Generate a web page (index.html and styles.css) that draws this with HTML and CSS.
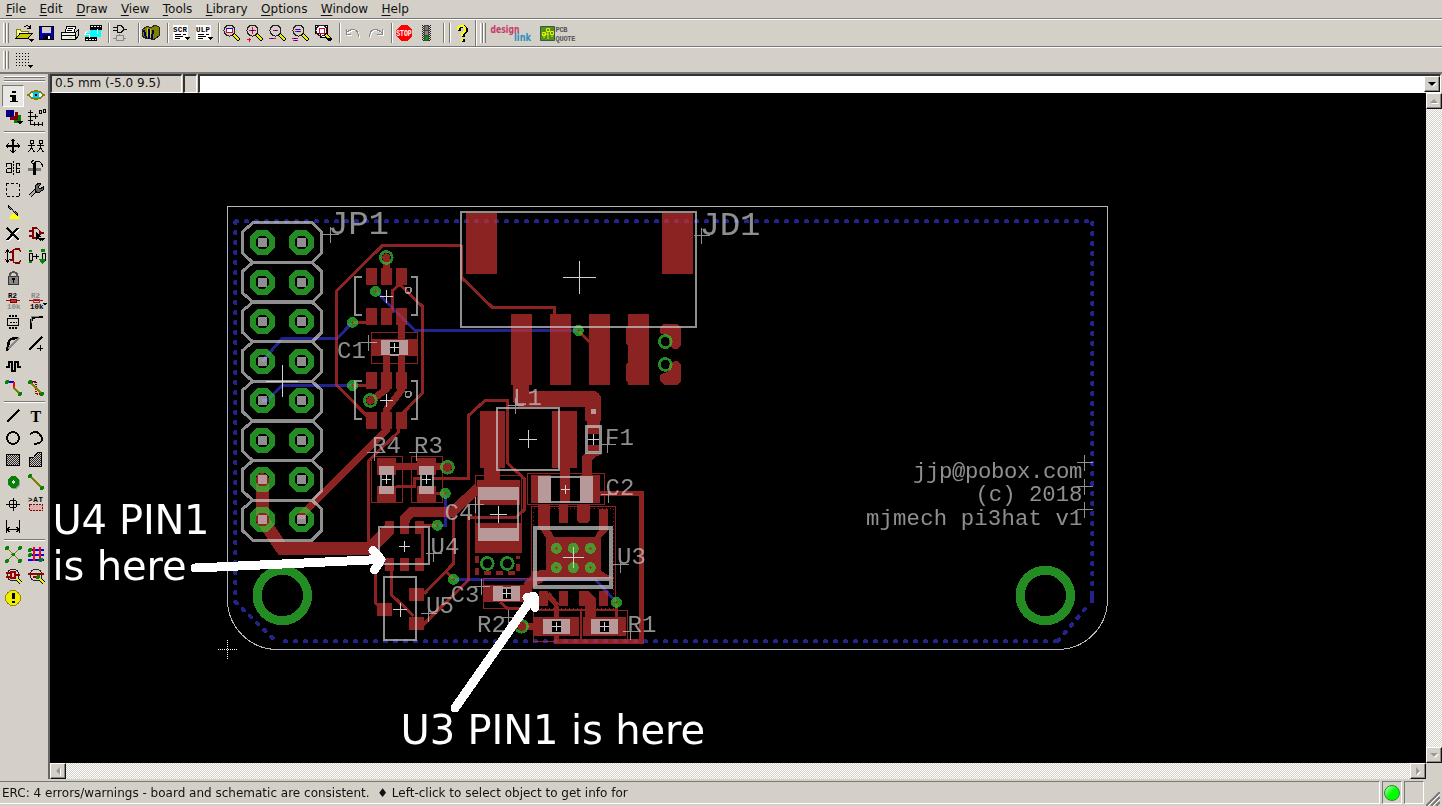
FILE: index.html
```html
<!DOCTYPE html>
<html lang="en">
<head>
<meta charset="utf-8">
<title>Board</title>
<link rel="stylesheet" href="styles.css">
</head>
<body>
<div class="app">
<nav class="menubar">
<span><u>F</u>ile</span><span><u>E</u>dit</span><span><u>D</u>raw</span><span><u>V</u>iew</span><span><u>T</u>ools</span><span><u>L</u>ibrary</span><span><u>O</u>ptions</span><span><u>W</u>indow</span><span><u>H</u>elp</span>
</nav>

<div class="toolbar actions">
<i class="grip"></i>
<svg class="ic" viewBox="0 0 23 24"><path d="M4 17V8h4l1 2h7v3" fill="#ffffa0" stroke="#808000"/><path d="M4 17.500l4-5h12l-4 5z" fill="#c8c800" stroke="#000"/><path d="M12 6q4-3 6 1M18 4v3h-3" fill="none" stroke="#000"/><path d="M17 18h5l-2.500 3z"/></svg>
<svg class="ic" viewBox="0 0 23 24"><path d="M4.500 5.500h14v13h-14z" fill="#0000c0" stroke="#000"/><path d="M7 6h9v6H7z" fill="#d4d0c8"/><path d="M8 14h8v4H8z"/><path d="M13 15h2v3h-2z" fill="#fff"/></svg>
<svg class="ic" viewBox="0 0 23 24"><path d="M7 11l2-6h9l-2 6" fill="#fff" stroke="#000"/><path d="M3.500 11.500h14v7h-14z" fill="#eee" stroke="#000"/><path d="M17.500 11.500l3-3v6l-3 4M4 14.500h13M10 7.500h5M9 9.500h5" fill="none" stroke="#000"/><path d="M11 16h3v1h-3z" fill="#dd0"/></svg>
<svg class="ic" viewBox="0 0 23 24"><path d="M9 4h12v5H9zM4 15h12v5H4z"/><path d="M9 9h11v7H4v-4h5z" fill="#0ff"/><path d="M6 10l-2 3h5M16 8v5M8 13v4" stroke="#fff" fill="none"/><path d="M10 5.500h10M5 18.500h10" stroke="#fff" stroke-dasharray="2 1"/></svg>
<i class="sep"></i>
<svg class="ic" viewBox="0 0 23 24"><path d="M7 4.500h4l2 2v3l-2 2H7zM3 6.500h4M3 9.500h4M13 8h4" fill="none" stroke="#111"/><path d="M6 14.500h7v5H6zM3 17h3M13 17h3M9.500 13v2" fill="none" stroke="#888"/></svg>
<i class="sep w1"></i>
<svg class="ic" viewBox="0 0 23 24"><path d="M2 9l5-4 4 2 4-3 4 2v9l-6 4-4-2-3 1-4-3z" fill="#808000" stroke="#222"/><path d="M4 9l2 8M9 8v10M13 9l-1 9" stroke="#000060" stroke-width="2"/><path d="M7 7v9M11 8l-1 9" stroke="#cc0"/></svg>
<i class="sep"></i>
<svg class="ic" viewBox="0 0 23 24"><path d="M4 4h15v15H4z" fill="#fff"/><text x="4" y="11" class="tiny" textLength="14">SCR</text><path d="M6 13.500h6M6 15.500h8M6 17.500h5M14 13.500h3" stroke="#000"/><path d="M15 16h6l-3 3z"/></svg>
<svg class="ic" viewBox="0 0 23 24"><path d="M4 4h15v15H4z" fill="#fff"/><text x="4" y="11" class="tiny" textLength="14">ULP</text><path d="M6 13.500h6M6 15.500h8M6 17.500h5M14 13.500h3" stroke="#000"/><path d="M15 16h6l-3 3z"/></svg>
<i class="sep w3"></i>
<svg class="ic" viewBox="0 0 23 24"><use href="#lens"/><path d="M6.500 7.500h6v4h-6z" fill="#fff" stroke="#d03"/><path d="M6 7.500h7" stroke="#00f"/></svg>
<svg class="ic" viewBox="0 0 23 24"><use href="#lens"/><path d="M6 9.500h7M9.500 6v7M4 18.500h4M6 17v4" stroke="#e02"/><path d="M8 9.500h3" stroke="#00f"/></svg>
<svg class="ic" viewBox="0 0 23 24"><use href="#lens"/><path d="M7 9.500h5M3 17.500h7" stroke="#e02"/><path d="M9 9.500h2M5 17.500h2" stroke="#00f"/></svg>
<svg class="ic" viewBox="0 0 23 24"><use href="#lens"/><path d="M6 8.500h6M6 10.500h6M3 17.500h6M4 19.500h5" stroke="#e02"/><path d="M7 8.500h4M8 10.500h3M5 17.500h2M6 19.500h2" stroke="#00f"/></svg>
<svg class="ic" viewBox="0 0 23 24"><path d="M3.500 4.500h12v12h-7v-4h-5z" fill="#fff" stroke="#000"/><use href="#lens"/><path d="M7 7.500h5v5H7z" fill="#fff" stroke="#d03"/><path d="M14 17h6l-3 4z"/></svg>
<i class="sep"></i>
<svg class="ic" viewBox="0 0 23 24"><path d="M5 8v5h5M5 12q5-5 9-3t3 7" fill="none" stroke="#fff" transform="translate(1 1)"/><path d="M5 8v5h5M5 12q5-5 9-3t3 7" fill="none" stroke="#888"/></svg>
<svg class="ic" viewBox="0 0 23 24"><path d="M18 8v5h-5M18 12q-5-5-9-3t-3 7" fill="none" stroke="#fff" transform="translate(1 1)"/><path d="M18 8v5h-5M18 12q-5-5-9-3t-3 7" fill="none" stroke="#888"/></svg>
<i class="sep"></i>
<svg class="ic" viewBox="0 0 23 24"><path d="M8 4h6l5 5v6l-5 5H8l-5-5V9z" fill="#f00"/><text x="3.200" y="15" class="tiny stop" textLength="15.500" lengthAdjust="spacingAndGlyphs">STOP</text></svg>
<svg class="ic" viewBox="0 0 23 24"><path d="M6 4h9v16H6z" fill="url(#hatch)"/><path d="M8 4h5v16H8z" fill="#444"/><circle cx="10.500" cy="7" r="2" fill="#777"/><circle cx="10.500" cy="12" r="2" fill="#888"/><circle cx="10.500" cy="17" r="2" fill="#090"/></svg>
<i class="sep w5"></i><i class="sep"></i>
<svg class="ic" viewBox="0 0 23 24"><path d="M7 9V7l2-2h3l2 2v3l-3 3v2M11 17v3" fill="none" stroke="#000" stroke-width="3" transform="translate(1 .5)"/><path d="M7 9V7l2-2h3l2 2v3l-3 3v2M11 17v3" fill="none" stroke="#ff0" stroke-width="2.500"/></svg>
<i class="divider"></i><i class="grip"></i>
<svg class="brand" viewBox="0 0 92 24"><text x="2.500" y="12" class="dl" textLength="29" lengthAdjust="spacingAndGlyphs">design</text><text x="26" y="20" class="dl lk" textLength="17" lengthAdjust="spacingAndGlyphs">link</text>
<path d="M52.500 5.500h14v14h-14z" fill="#4d9516" stroke="#405060"/><path d="M56 17v-4h4v5M60 10v4M64 16v-3" fill="none" stroke="#ee0"/><path d="M54.500 11.500h3v3h-3zM58.500 7.500h3v3h-3zM62.500 10.500h3v3h-3z" fill="none" stroke="#ee0"/><text x="67.500" y="11" class="pcb" textLength="12">PCB</text><text x="67.500" y="20" class="pcb" textLength="20">QUOTE</text></svg>
</div>

<div class="toolbar options"><i class="grip"></i>
<svg class="ic" viewBox="0 0 23 24"><path d="M4 4.500h15M4 7.500h15M4 10.500h15M4 13.500h15M4 16.500h12" stroke="#000" stroke-dasharray="1 2"/><path d="M15 16h6l-3 3z"/></svg></div>

<div class="main">
<aside class="tools">
<i class="hgrip"></i>
<div class="grid first">
<svg class="on" viewBox="0 0 22 22"><path d="M10 5h4v3h-4zM8 10h6v6h2v2H8v-2h2v-4H8z"/></svg>
<svg viewBox="0 0 22 22"><path d="M3 10q8-8 16 0q-8 8-16 0z" fill="#fff" stroke="#808000" stroke-width="1.500"/><circle cx="11" cy="10" r="3.500" fill="#00c8e0"/><circle cx="11" cy="10" r="1.300"/></svg>
<svg viewBox="0 0 22 22"><path d="M8 9h5V5h3v8H8z" fill="#800000"/><path d="M4 3h8v7H4z" fill="#000080"/><path d="M12 13h4V8h3v8h-7z" fill="#008000"/><path d="M15 14h6l-3 4z"/></svg>
<svg viewBox="0 0 22 22"><path d="M5.500 3v14.500H18M3 5.500h5M3 9.500h5M3 13.500h5M9.500 15v4M13.500 15v4M17.500 15v4M8 9.500h5M10.500 7v5" fill="none" stroke="#000"/><path d="M14 3h2v3h-2zM18 2h2v3h-2z" fill="none" stroke="#000"/></svg>
</div>
<i class="hsep"></i>
<div class="grid">
<svg viewBox="0 0 22 22"><path d="M11 4v14M4 11h14M8.500 6.500L11 4l2.500 2.500M8.500 15.500L11 18l2.500-2.500M6.500 8.500L4 11l2.500 2.500M15.500 8.500L18 11l-2.500 2.500" fill="none" stroke="#000" stroke-width="1.400"/></svg>
<svg viewBox="0 0 22 22"><path d="M5 5h3v3H5zM14 5h3v3h-3zM3 10.500h7M12 10.500h7M6.500 8v5l-3 4M6.500 13l3 4M15.500 8v5l-3 4M15.500 13l3 4" fill="none" stroke="#000"/></svg>
<svg viewBox="0 0 22 22"><path d="M4 6.500h5v9H4M5 11h4M18 6.500h-4v9h4M14 11h4" fill="none" stroke="#000"/><path d="M4.500 6v4M4.500 12v4M17.500 6v3M17.500 13v3" stroke="#000"/><path d="M11.500 4v14" stroke="#000" stroke-dasharray="2 1"/></svg>
<svg viewBox="0 0 22 22"><path d="M3 11h13v3H3z" fill="#777"/><path d="M8 6h3v12H8z"/><path d="M9 6q6-5 9 4M9 3l-3 2 3 3" fill="none" stroke="#000"/></svg>
<svg viewBox="0 0 22 22"><path d="M4.500 4.500h13v13h-13z" fill="none" stroke="#000" stroke-dasharray="2.500 2"/></svg>
<svg viewBox="0 0 22 22"><path d="M5 17l7-7" stroke="#000" stroke-width="4"/><path d="M5 17l7-7" stroke="#aaa" stroke-width="2"/><path d="M14 4l-4 3v5l3 2 5-3v-3l-3 2-2-2 3-3z" fill="#666" stroke="#000"/></svg>
<svg viewBox="0 0 22 22"><path d="M6 5l10 9" stroke="#000" stroke-width="2"/><path d="M7 6l8 7" stroke="#aaa" stroke-width=".8"/><path d="M10 13l5 1 3 4H7z" fill="#ff0"/></svg><b></b>
<svg viewBox="0 0 22 22"><path d="M5 5l12 12M16 5L5 17" fill="none" stroke="#fff" stroke-width="2" transform="translate(1 1)"/><path d="M5 5l12 12M16 5L5 17" stroke="#000" stroke-width="2.300"/></svg>
<svg viewBox="0 0 22 22"><path d="M8 5h4l3 3v4l-3 3H8zM4 8h4M4 13h4M15 10h4" fill="none" stroke="#800000" stroke-width="1.300"/><path d="M11 9v8l2-2 2 3 1-1-2-3h3z"/><path d="M15 15h5l-3 3z"/></svg>
<svg viewBox="0 0 22 22"><path d="M5.500 5v12M3 8l2.500-3L8 8M3 14l2.500 3L8 14" fill="none" stroke="#000"/><path d="M18 4h-4q-4 0-3 3v8q0 3 3 3h4M11 7H8M11 15H8M17 4l2 3M17 18l2-3" fill="none" stroke="#800000" stroke-width="1.300"/></svg>
<svg viewBox="0 0 22 22"><path d="M4 8h3v7H4zM17 8h3v7h-3zM8 11.500h6M11 9v5" fill="none" stroke="#000"/><path d="M4 5h3v2H4zM4 16h3v2H4zM16 4h4v3h-4zM14 14h6v2l-3 3z" fill="#080"/></svg>
<svg viewBox="0 0 22 22"><path d="M6.500 9.500h10v8h-10z" fill="#888" stroke="#333"/><path d="M8 10V7q3.500-4 7 0v3" fill="none" stroke="#555" stroke-width="2"/><path d="M10 11h3v2h-1v3h-1v-3h-1z"/></svg><b></b>
<svg viewBox="0 0 22 22"><text x="6" y="9" class="tiny">R2</text><text x="5" y="20" class="tiny g">10k</text><path d="M4 11.500h14" stroke="#a00"/><path d="M8 10.500h6v3H8z" fill="#b33" stroke="#800"/></svg>
<svg viewBox="0 0 22 22"><text x="6" y="9" class="tiny g">R2</text><text x="5" y="20" class="tiny">10k</text><path d="M4 11.500h14" stroke="#a00"/><path d="M8 10.500h6v3H8z" fill="none" stroke="#a33"/><path d="M17 14h5l-2 3z"/></svg>
<svg viewBox="0 0 22 22"><path d="M5.500 7.500h11v7h-11z" fill="none" stroke="#000"/><path d="M7 4.500h9M7 5.500h9M7 16.500h9M7 17.500h9M8 11h7" stroke="#000" stroke-dasharray="2 1"/></svg>
<svg viewBox="0 0 22 22"><path d="M6 18v-6q0-6 6-6h6" fill="none" stroke="#000" stroke-width="2.500"/><path d="M6.500 12V5h7" fill="none" stroke="#888"/></svg>
<svg viewBox="0 0 22 22"><path d="M5 18L7 8q2-3 10-3" fill="none" stroke="#000" stroke-width="2.500"/><path d="M6 16l11-11" stroke="#888" stroke-width="1.500"/></svg>
<svg viewBox="0 0 22 22"><path d="M4 17L17 4" stroke="#000" stroke-width="2.500"/><path d="M12 15.500h6M15.500 12v6" stroke="#000"/></svg>
<svg viewBox="0 0 22 22"><path d="M4 12h3V7h3v9h3V7h3v5h3" fill="none" stroke="#000" stroke-width="1.700"/></svg><b></b>
<svg viewBox="0 0 22 22"><path d="M5 5h7" stroke="#00f" stroke-width="2"/><path d="M12 5v6" stroke="#f00" stroke-width="2"/><path d="M12 11l6 6" stroke="#808000" stroke-width="1.500"/><use href="#nd" x="5" y="5"/><use href="#nd" x="18" y="17"/></svg>
<svg viewBox="0 0 22 22"><path d="M5 5h6v5M11 10v7h6" fill="none" stroke="#900" stroke-width="2" stroke-dasharray="1 1"/><path d="M6 4h5v5" fill="none" stroke="#00a" stroke-dasharray="1 1"/><path d="M5 5l12 12" stroke="#808000" stroke-width="1.500"/><use href="#nd" x="5" y="5"/><use href="#nd" x="17" y="17"/></svg>
</div>
<i class="hsep"></i>
<div class="grid">
<svg viewBox="0 0 22 22"><path d="M5 17L17 5" stroke="#000" stroke-width="1.700"/></svg>
<svg viewBox="0 0 22 22"><text x="5.500" y="17" class="serif">T</text></svg>
<svg viewBox="0 0 22 22"><circle cx="11" cy="11" r="6" fill="none" stroke="#000" stroke-width="1.800"/></svg>
<svg viewBox="0 0 22 22"><path d="M5 7q7-5 11 2t-7 8" fill="none" stroke="#000" stroke-width="1.800"/></svg>
<svg viewBox="0 0 22 22"><path d="M4.500 5.500h13v11h-13z" fill="url(#hatch)" stroke="#000"/></svg>
<svg viewBox="0 0 22 22"><path d="M4.500 8.500h4l4-5h4v14h-12z" fill="url(#hatch)" stroke="#000"/></svg>
<svg viewBox="0 0 22 22"><circle cx="12.500" cy="12" r="6" fill="#999"/><circle cx="11.500" cy="11" r="6" fill="#088008"/><circle cx="11.500" cy="11" r="1.700" fill="#ddd"/></svg>
<svg viewBox="0 0 22 22"><path d="M5 5l12 12" stroke="#808000" stroke-width="1.500"/><use href="#nd" x="5" y="5"/><use href="#nd" x="17" y="17"/></svg>
<svg viewBox="0 0 22 22"><path d="M11 5v13M4 11h14" stroke="#000"/><circle cx="11" cy="11" r="4" fill="none" stroke="#000"/></svg>
<svg viewBox="0 0 22 22"><text x="3" y="9" class="tiny" textLength="15">&gt;AT</text><path d="M4.500 11.500h13v6h-13z" fill="#ddb0b0" stroke="#800" stroke-dasharray="2 1"/></svg>
<svg viewBox="0 0 22 22"><path d="M4.500 5v13M17.500 5v13M5 14.500h12M8 12l-3 2.500L8 17M14 12l3 2.500L14 17" fill="none" stroke="#000" stroke-width="1.200"/></svg><b></b>
</div>
<i class="hsep"></i>
<div class="grid">
<svg viewBox="0 0 22 22"><path d="M5 5l13 13M18 5L5 18" stroke="#808000"/><use href="#nd" x="5" y="5"/><use href="#nd" x="18" y="5"/><use href="#nd" x="11.500" y="11.500"/><use href="#nd" x="5" y="18"/><use href="#nd" x="18" y="18"/></svg>
<svg viewBox="0 0 22 22"><path d="M3 6.500h16M3 11.500h16M3 16.500h16" stroke="#00f" stroke-width="2"/><path d="M9 4v14M15 4v14" stroke="#f00" stroke-width="2"/><use href="#nd" x="5" y="7"/><use href="#nd" x="5" y="12"/><use href="#nd" x="16" y="17"/></svg>
<svg viewBox="0 0 22 22"><circle cx="11" cy="10" r="6" fill="none" stroke="#222"/><path d="M9 7h4v6H9zM4 8h5M4 12h5M13 10h5" fill="none" stroke="#900" stroke-width="1.300"/><path d="M15 14l4 4" stroke="#000" stroke-width="3"/><path d="M15 14l4 4" stroke="#ee0" stroke-width="1.500"/></svg>
<svg viewBox="0 0 22 22"><circle cx="11" cy="10" r="6" fill="none" stroke="#222"/><path d="M3 8.500h16" stroke="#900" stroke-width="2"/><path d="M8 11.500h7" stroke="#900" stroke-width="2"/><use href="#nd" x="13" y="12"/><path d="M15 14l4 4" stroke="#000" stroke-width="3"/><path d="M15 14l4 4" stroke="#ee0" stroke-width="1.500"/></svg>
<svg viewBox="0 0 22 22"><circle cx="11" cy="11" r="7.500" fill="#ee0" stroke="#998a00"/><path d="M10 6h2.500v6H10zM10 14h2.500v2H10z"/></svg><b></b>
</div>
</aside>

<section class="work">
<div class="command"><span class="coord">0.5 mm (-5.0 9.5)</span><span class="gap"></span><span class="entry"><button class="btn dn dark"></button></span></div>
<div class="view">
<svg class="board" viewBox="50 93 1376 670">
<defs>
<pattern id="hatch" width="2" height="2" patternUnits="userSpaceOnUse"><path d="M0 0h1v1H0zM1 1h1v1H1z" fill="#222"/></pattern>
<g id="lens"><circle cx="9.500" cy="9.500" r="5.500" fill="none" stroke="#222"/><path d="M13.500 13.500l6 6" stroke="#000" stroke-width="3.500"/><path d="M14 14l5 5" stroke="#ee0" stroke-width="2"/></g>
<circle id="nd" r="2" fill="#088008"/>
<path id="oct" d="M-4-9.600h8l5.600 5.600v8l-5.600 5.600h-8l-5.600-5.600v-8z" stroke-width="5.800"/>
<path id="sq" d="M-4.300-4.300h9v9h-9z"/>
<g id="row"><use href="#oct" x="262.300"/><use href="#oct" x="301.300"/></g>
<g id="holes"><use href="#sq" x="262.300"/><use href="#sq" x="301.300"/></g>
<path id="cell" d="M253 222.700h59l9.500 9v21.500l-9.500 9.500h-59l-10.500-9.500v-21.500z"/>
<path id="o8" d="M-8 0H8M0-8V8"/>
<path id="o5" d="M-4.500 0h9M0-4.500v9"/>
<circle id="via" r="5.500" stroke="none"/>
<circle id="ring" r="6" stroke-width="2.700"/>
<path id="pads" d="M366 268h11v17h-11zM381 268h11v17h-11zM396 268h11v17h-11zM366 308h11v17h-11zM381 308h11v17h-11zM396 308h11v17h-11z"/>
</defs>

<g class="bottom">
<path class="dots" d="M235.500 221.300H1092M235.300 221.500V602M235.500 602l40 39M284.500 641.300h775M1092.300 222.500v370M1058 641l32-38"/><path d="M1092.300 591v12" stroke-width="4"/>
<path d="M262.300 361.300L282 338.500h55l15.500-16.200M262.300 400.600h5l15-15.100h70.200M375.500 291.300l39.500 39.200h163.300M445.300 493v32.300h-8M453.500 579.500H595l21.500 22.500"/>
</g>

<g class="top">
<g class="track">
<path d="M461 245.300h-78.300l-46 45.400v94.600L367 416M401 283l-9 8v22M398 283l24.700 23.700V393L402 414M352.500 322.300H366M352.500 385.500H366M398.300 428v4l-30 29V546M461 245v32l31 30h62.500v8M578.300 330.500l12 12M396 486.500h18.500v-8h53.800v-62.800l16.700-15.200h22.500V463l16.500 15.500V510l-8 7.500h-47.700V580L423 625M435 493.300h10M424 525.300h13M375.700 560v43l4 5M391.700 570v25l22 21M424 594l29.500-30.500V516M453.500 579.300l-8-8M422.500 530v30M616.700 602v15M500 602l7 6h22"/>
<path stroke-width="7" d="M386.300 258v12M401.500 322v68l-15 19.500V430L301.300 515v4M386.500 352v37l-16 12M395 466.700h52M521 626.300h13"/>
<path stroke-width="13" d="M262.300 479.600V519.300L282 548.500H370l20-20"/>
<path stroke-width="10" d="M404.500 523v-4l7-7H452l26-24"/>
<path stroke-width="16" stroke-linejoin="round" d="M521 384v15h72v22"/>
<path stroke-width="4.500" d="M600 493.500h41.500v148h-85V606"/>
</g>
<circle cx="386.300" cy="257.500" r="4.200"/><circle cx="370.300" cy="400.500" r="4.200"/><circle cx="447.500" cy="467.300" r="4.500"/><circle cx="521.500" cy="626.300" r="4.500"/><circle cx="262.300" cy="479.600" r="6.500"/><circle cx="262.300" cy="519.300" r="6.500"/>
<use href="#pads"/><use href="#pads" y="104"/>
<path d="M372 339h45v17h-45zM377 458h19v17h-19zM377 486h19v16h-19zM417 458h19v17h-19zM417 486h19v16h-19zM385 521h9v13h-9zM400 521h9v13h-9zM415 521h9v13h-9zM385 558h9v13h-9zM400 558h9v13h-9zM415 558h9v13h-9zM377 603h15v13h-15zM409 588h15v13h-15zM409 617h15v13h-15zM466 213h31v61h-31zM662 213h31v61h-31zM511 314h21v71h-21zM550 314h21v71h-21zM589 314h21v71h-21zM628 314h21v71h-21v-2l-2-3v-16l2-2v-16l-2-2v-17h2z"/>
<path d="M663 324h15l3 4v17l-3 4h-5l-4-5v-7l-9-4v-6zM675 361h3l3 4v16l-4 4h-13l-4-4v-6l9-4v-7zM480 411h25v57h-5v12h-16v-12h-4zM552 411h25v57h-7v8h-10v-8h-8zM587 420h13v9h-13zM585 453h16v2l-5 1-4 4v15h-10v-18zM588 427h11v7h-11zM588 445h11v7h-11zM477 480h43v25h-43zM475 523h46v29h-46zM531 475h20v28h-20zM560 475h10v28h-10zM580 475h20v28h-20zM546 537h55v34l14 8h-84v-8l15-1zM538 504h12v26l5 8h-9l-8-12zM559 504h9v19h-9zM577 504h13v16l-3 3h-8l-2-3zM599 509h9v21l-7 8h-7l5-8zM539 591h9v15h-9zM559 591h9v15h-9zM579 591h9l8 8v20h-11v-13h-6zM599 591h9v15h-9zM484 585h46v17h-46zM524 582l10-10h12v8l-20 12zM549 591l10 13-3 4-9-9zM534 617h45v19h-45zM583 617h43v19h-43z"/>
<g class="keepout"><path d="M371.500 332.500h46v31h-46zM371.500 456.500h31v46h-31zM411.500 456.500h31v46h-31zM475.500 475.500h46v77h-46zM527.500 473.500h77v31h-77zM531.500 506.500h84v103h-84zM483.500 578.500h47v30h-47zM533.500 610.500h47v31h-47zM581.500 610.500h46v31h-46z"/><path stroke-width="1" stroke-dasharray="1 3" d="M533.500 508.500h80v100h-80z"/><path stroke-width="4.500" stroke-dasharray="7 5" stroke-linejoin="round" d="M477 556v17h41v-17"/></g>
</g>

<g class="black"><path d="M390 342h9v12h-9zM382 475h10v10h-10zM422 475h10v10h-10zM588 434h11v11h-11zM551 479h9v21h-9zM570 479h10v21h-10zM503 588h8v11h-8zM552 621h9v11h-9zM600 621h9v11h-9z"/></g>

<g class="drills">
<use href="#row" y="242.400"/><use href="#row" y="282.200"/><use href="#row" y="321.600"/><use href="#row" y="361.300"/><use href="#row" y="400.600"/><use href="#row" y="440.300"/><use href="#row" y="479.600"/><use href="#row" y="519.300"/>
<circle cx="282.300" cy="595.500" r="25.200" stroke-width="9"/><circle cx="1045.300" cy="595.500" r="25.200" stroke-width="9"/>
<use href="#ring" x="386.300" y="257.500"/><use href="#ring" x="370.300" y="400.500"/><use href="#ring" x="447.500" y="467.300"/><use href="#ring" x="665.300" y="341.600"/><use href="#ring" x="665.300" y="364.500"/><use href="#ring" x="487.300" y="563.500"/><use href="#ring" x="507.300" y="563.500"/><use href="#ring" x="521.500" y="626.300"/>
<g class="solid"><use href="#via" x="375.500" y="291.300"/><use href="#via" x="352.500" y="322.300"/><use href="#via" x="352.500" y="385.500"/><use href="#via" x="578.300" y="330.500"/><use href="#via" x="445.300" y="493.300"/><use href="#via" x="437.300" y="525.300"/><use href="#via" x="453.500" y="579.300"/><use href="#via" x="616.500" y="602.300"/><use href="#via" x="556.300" y="548.300"/><use href="#via" x="573.300" y="548.300"/><use href="#via" x="590.300" y="548.300"/><use href="#via" x="556.300" y="567.600"/><use href="#via" x="573.300" y="567.600"/><use href="#via" x="590.300" y="567.600"/></g>
</g>
<path class="pins" d="M374 291.500h3M375.500 290v3M351 322.500h3M352.500 321v3M351 385.500h3M352.500 384v3M577 330.500h3M578.500 329v3M444 493.500h3M445.500 492v3M436 525.500h3M437.500 524v3M452 579.500h3M453.500 578v3M615 602.500h3M616.500 601v3M555 548.500h3M556.500 547v3M589 548.500h3M590.500 547v3M555 567.500h3M556.500 566v3M589 567.500h3M590.500 566v3"/>

<g class="silk">
<g class="fill"><use href="#holes" y="242.400"/><use href="#holes" y="282.200"/><use href="#holes" y="321.600"/><use href="#holes" y="361.300"/><use href="#holes" y="400.600"/><use href="#holes" y="440.300"/><use href="#holes" y="479.600"/><use href="#holes" y="519.300"/>
<path d="M381 340h9v15h-9zM399 340h9v15h-9zM379 466h15v8.500h-15zM379 485.500h15v8h-15zM419 466h15v8.500h-15zM419 485.500h15v8h-15zM591 409h5v5h-5zM478 487h41v13h-41zM478 528h41v13h-41zM538 476h13v27h-13zM580 476h13v27h-13zM493 586h10v15h-10zM511 586h9v15h-9zM543 619h9v15h-9zM561 619h9v15h-9zM591 619h9v15h-9zM609 619h9v15h-9zM535 577h76v4h-76z"/></g>
<g stroke-width="3"><use href="#cell"/><use href="#cell" y="39.630"/><use href="#cell" y="79.260"/><use href="#cell" y="118.890"/><use href="#cell" y="158.520"/><use href="#cell" y="198.150"/><use href="#cell" y="237.780"/><use href="#cell" y="277.400"/></g>
<path stroke-width="2.500" d="M586.500 426.500h14v26h-14z"/>
<path stroke-width="4" d="M535 528.300h75.500v58.500H535z"/>
<path stroke-width="2" d="M362 277h-7v38h7M411 277h6v38h-6M362 381h-7v38h7M411 381h6v38h-6M461 212h235v115H461zM379 527h50v37h-50zM384 577h32v63h-32zM497 408h62v62h-62zM479 487v54M518 487v54M551 477h29M551 501.500h29M390 341h9M390 354.500h9M380.500 474v12M392.500 474v12M420.500 474v12M432.500 474v12M503 587.500h8M503 600h8M552 620h9M552 633h9M600 620h9M600 633h9"/>
<circle cx="408.300" cy="290.300" r="3" stroke-width="1.500"/><circle cx="408.300" cy="394.300" r="3" stroke-width="1.500"/>
<g class="thin"><use href="#o8" x="330.500" y="234.500"/><use href="#o8" x="368.500" y="342.500"/><use href="#o8" x="374.500" y="452.500"/><use href="#o8" x="416.500" y="452.500"/><use href="#o8" x="433.500" y="553.500"/><use href="#o8" x="428.500" y="613.500"/><use href="#o8" x="701.500" y="235.500"/><use href="#o8" x="607.500" y="444.500"/><use href="#o8" x="515.500" y="405.500"/><use href="#o8" x="475.500" y="504.500"/><use href="#o8" x="608.500" y="494.500"/><use href="#o8" x="620.500" y="564.500"/><use href="#o8" x="481.500" y="586.500"/><use href="#o8" x="508.500" y="617.500"/><use href="#o8" x="630.500" y="631.500"/><use href="#o8" x="1084.500" y="462.500"/><use href="#o8" x="1084.500" y="486.500"/><use href="#o8" x="1084.500" y="509.500"/></g>
<g class="ref"><text class="big" x="328" y="234" textLength="61">JP1</text><text class="big" x="699.500" y="235" textLength="61">JD1</text>
<text x="337" y="357.500" textLength="29">C1</text><text x="372" y="452.500" textLength="29">R4</text><text x="414" y="452.500" textLength="29">R3</text><text x="430.500" y="553.500" textLength="29">U4</text><text x="426" y="613" textLength="28">U5</text><text x="513" y="405" textLength="29">L1</text><text x="605" y="444.500" textLength="29">F1</text><text x="605.500" y="494.500" textLength="29">C2</text><text x="444.500" y="519.500" textLength="29">C4</text><text x="617" y="564" textLength="29">U3</text><text x="450.500" y="601.500" textLength="29">C3</text><text x="477" y="632" textLength="29">R2</text><text x="627.500" y="631.500" textLength="29">R1</text>
<g class="note"><text x="913" y="478" textLength="169.500">jjp@pobox.com</text><text x="975.500" y="501" textLength="107">(c) 2018</text><text x="866" y="525" textLength="216.500">mjmech pi3hat v1</text></g></g>
</g>
<path class="outline" d="M227.500 206.500h880V599.500a50 50 0 0 1-50 50H277.500a50 50 0 0 1-50-50z"/>
<g class="cross"><path d="M266 381.500h32M282.500 365v32M563 277.500h33M579.500 261v33M380 296.500h13M386.500 290v13M380 400.500h13M386.500 394v13M399 546.500h11M404.500 541v11M393 609.500h14M400.500 603v14M519 439.500h18M528.500 430v18M490 514.500h17M498.500 506v17M563 557.500h21M573.500 547v21M588 439.500h11M593.500 434v11"/><use href="#o5" x="394.500" y="347.500"/><use href="#o5" x="386.500" y="479.500"/><use href="#o5" x="426.500" y="479.500"/><use href="#o5" x="565.500" y="489.500"/><use href="#o5" x="506.500" y="593.500"/><use href="#o5" x="556.500" y="626.500"/><use href="#o5" x="604.500" y="626.500"/><path stroke-dasharray="1 1" stroke="#fff" d="M218 649.500h19M227.500 640v19"/></g>

<g class="callout"><path d="M195 568L380 559.500M373 550.500l8 9-6.500 10.500M455 708l75-107M527 597.500l7-1 1 11"/>
<text x="52.500" y="534" textLength="157">U4 PIN1</text><text x="52.500" y="580" textLength="134">is here</text><text x="400.500" y="743.500" textLength="304.500">U3 PIN1 is here</text></g>
</svg>
<div class="vbar"><button class="btn up"></button><button class="btn dn"></button></div>
<div class="hbar"><button class="btn lt"></button><button class="btn rt"></button></div>
<div class="corner"></div>
</div>
</section>
</div>

<footer class="status"><span class="msg">ERC: 4 errors/warnings - board and schematic are consistent.&nbsp; ♦ Left-click to select object to get info for</span><span class="led"><i></i></span><span class="blank"></span><svg class="size" viewBox="0 0 14 14"><path d="M0 14L14 0M5 14l9-9M10 14l4-4" stroke="#777" stroke-width="2"/><path d="M2 14L14 2M7 14l7-7" stroke="#fff"/></svg></footer>
</div>
</body>
</html>
```
FILE: styles.css
```css
* { box-sizing: border-box; }
body { margin: 0; background: #d4d0c8; font: 12px "DejaVu Sans", sans-serif; color: #111; overflow: hidden; }
.app { width: 1442px; height: 806px; display: flex; flex-direction: column; }
svg { display: block; }

.menubar { height: 19px; flex: none; display: flex; gap: 13.4px; padding: 2px 6px 0; border-bottom: 1px solid #777; line-height: 15px; }
.menubar u { text-underline-offset: 2px; }
.toolbar { flex: none; display: flex; border-top: 1px solid #fff; }
.actions { height: 28px; border-bottom: 1px solid #777; }
.options { height: 25px; border-bottom: 0; }
.grip { width: 6px; margin: 3px 2.5px 3px 3px; border: solid #777; border-width: 0 1px 0 0; background: linear-gradient(90deg, #fff 1px, transparent 1px 2px, #777 2px 3px, #fff 3px 4px, transparent 4px); }
.ic { width: 23px; height: 24px; margin-top: 1px; flex: none; shape-rendering: crispEdges; }
.sep { width: 6px; margin: 3px 0; border-right: 1px solid #fff; background: linear-gradient(#777, #777) right / 1px 100% no-repeat; flex: none; }
.w1 { width: 7px; }
.w3 { width: 5px; }
.w5 { width: 6px; }
.divider { width: 3px; border-right: 1px solid #fff; background: linear-gradient(#777, #777) right / 1px 100% no-repeat; }
.brand { width: 92px; height: 24px; margin-top: 1px; }
.tiny { font: bold 7.5px "Liberation Mono", monospace; }
.tiny.g { fill: #888; }
.tiny.stop { fill: #fff; font-size: 8.5px; }
.serif { font: bold 16px "Liberation Serif", serif; }
.dl { font: bold 10.5px "DejaVu Sans", sans-serif; fill: #c43c68; }
.dl.lk { fill: #2f8fbd; }
.pcb { font: bold 7px "Liberation Mono", monospace; fill: #555; }

.main { flex: 1; min-height: 0; display: flex; border-top: 2px solid #777; }
.tools { width: 50px; flex: none; border-right: 2px solid #666; }
.hgrip { display: block; height: 6px; margin: 2px 3px 3px 4px; border: 1px solid #fff; border-width: 1px 0; box-shadow: inset 0 -1px #777, inset 0 1px #777; }
.hsep { display: block; height: 2px; margin: 2px 3px 2px 4px; border-top: 1px solid #777; border-bottom: 1px solid #fff; }
.grid { display: grid; grid-template-columns: 22px 22px; grid-auto-rows: 22px; padding-left: 2px; column-gap: 1px; }
.grid svg { width: 22px; height: 22px; shape-rendering: crispEdges; }
.grid svg.on { border: 1px solid #777; border-right-color: #fff; border-bottom-color: #fff; background: #e9e7e3; }

.work { flex: 1; min-width: 0; display: flex; flex-direction: column; }
.command { height: 19px; display: flex; gap: 1px; }
.command span { border: 1px solid #333; border-width: 2px 1px 1px 2px; border-right-color: #fff; border-bottom-color: #fff; }
.coord { width: 132px; padding-left: 3px; line-height: 14px; }
.gap { width: 14px; }
.entry { flex: 1; background: #fff; display: flex; justify-content: flex-end; margin-right: 1px; }
.view { flex: 1; min-height: 0; display: grid; grid-template-columns: 1376px 16px; grid-template-rows: 670px 16px; }
.board { width: 1376px; height: 670px; background: #000; }
.vbar, .hbar { display: flex; justify-content: space-between; background: repeating-conic-gradient(#fff 0 25%, #d4d0c8 0 50%) 0 0 / 2px 2px; }
.vbar { flex-direction: column; }
.corner { background: #d4d0c8; }
.btn { width: 16px; height: 16px; padding: 0; border: 1px solid #fff; border-right-color: #111; border-bottom-color: #111; background: #d4d0c8; box-shadow: inset -1px -1px #888; display: flex; align-items: center; justify-content: center; }
.btn::before { content: ""; border: 4px solid transparent; filter: drop-shadow(1px 1px #fff); }
.up::before { border-bottom-color: #999; border-top: 0; }
.dn::before { border-top-color: #999; border-bottom: 0; }
.lt::before { border-right-color: #999; border-left: 0; }
.rt::before { border-left-color: #999; border-right: 0; }
.command .btn { height: 16px; }
.dark::before { border-top-color: #000; }

.status { height: 27px; flex: none; display: flex; padding: 2px 2px 2px 0; gap: 2px; }
.status span { border: 1px solid #777; border-right-color: #fff; border-bottom-color: #fff; }
.msg { width: 1380px; line-height: 23px; padding-left: 2px; border-left: 0 !important; white-space: pre; }
.led { width: 20px; display: grid; place-items: center; }
.led i { width: 16px; height: 16px; border-radius: 50%; border: 1px solid #2a8a2a; background: linear-gradient(135deg, #8f8 15%, #0f0 50%); }
.blank { width: 20px; }
.size { width: 14px; height: 14px; align-self: flex-end; margin-bottom: -2px; }

.board path, .board circle, .board use { shape-rendering: crispEdges; }
.bottom { opacity: .714; fill: none; stroke: #3232c8; stroke-width: 3; }
.dots { stroke-width: 4; stroke-dasharray: 2 8; stroke-linecap: round; }
.top { opacity: .714; fill: #c43232; }
.track { fill: none; stroke: #c43232; stroke-width: 3; }
.keepout { fill: none; stroke: #c43232; }
.black { fill: #000; }
.drills { opacity: .714; fill: none; stroke: #32c432; }
.solid { fill: #32c432; }
.pins { stroke: #a03030; fill: none; }
.silk { opacity: .714; fill: none; stroke: #c9c9c9; }
.fill { fill: #c9c9c9; stroke: none; }
.thin { stroke-width: 1; }
.ref { fill: #c9c9c9; stroke: none; font: 24px "Liberation Mono", monospace; }
.big { font-size: 34px; }
.note { font-size: 22.3px; }
.outline { fill: none; stroke: #b8b8b8; }
.cross { fill: none; stroke: #d4d0d0; }
.callout path { fill: none; stroke: #fff; stroke-width: 9; stroke-linecap: round; stroke-linejoin: round; }
.callout text { fill: #fff; font: 40px "DejaVu Sans", sans-serif; }
```
